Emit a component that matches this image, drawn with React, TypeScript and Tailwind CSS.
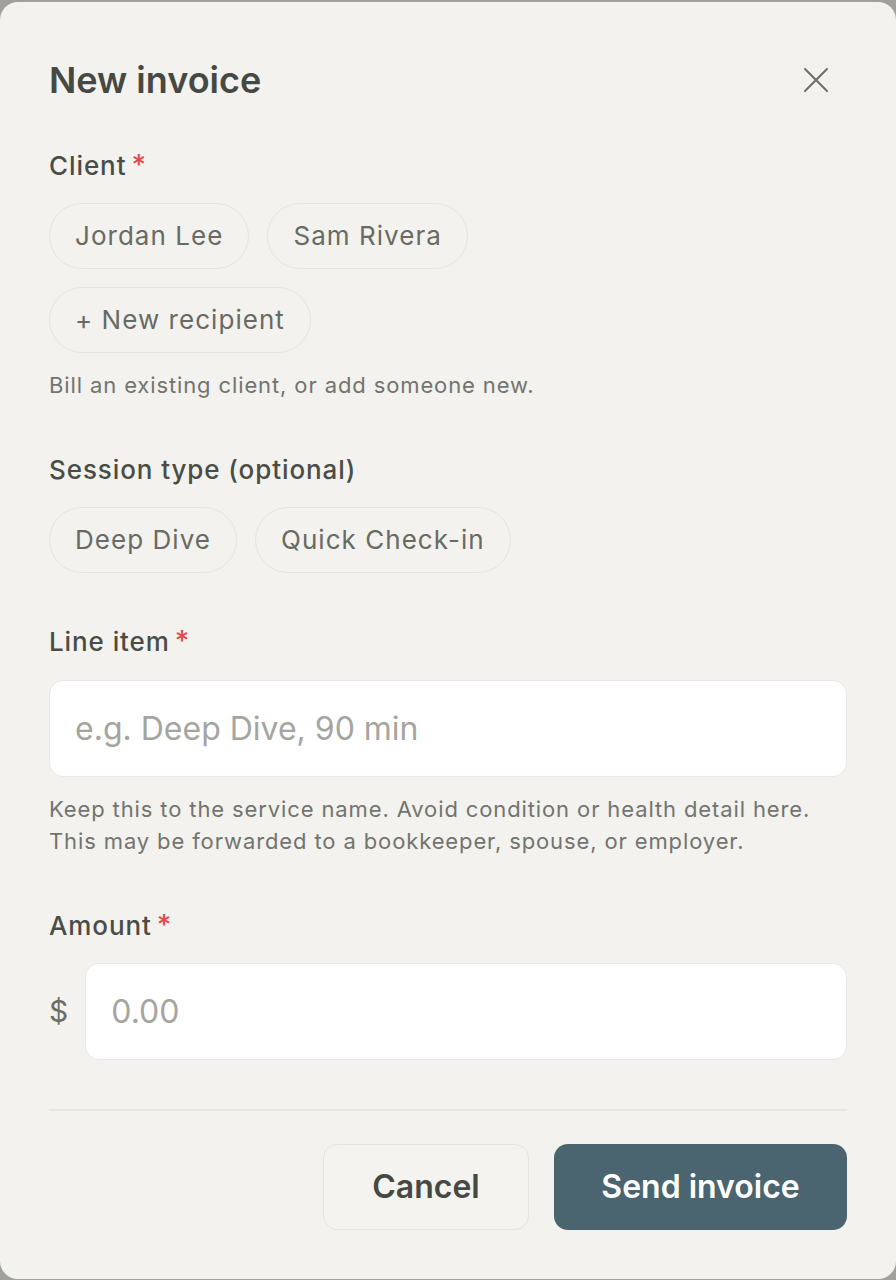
import React from "react";

function Chip({ label }: { label: string }) {
  return (
    <button className="h-[66px] px-[25px] rounded-full border-[1.5px] border-[#e6e4df] bg-[#f3f2ee] text-[26px] tracking-[0.04em] text-[#686a64] leading-none">
      {label}
    </button>
  );
}

function Label({ text, required }: { text: string; required?: boolean }) {
  return (
    <div className="h-[36px] text-[26px] leading-[36px] font-medium tracking-[0.035em] text-[#4a4d47]">
      {text}
      {required && <span className="ml-[5px] text-[28px] leading-none text-[#e5484d]">*</span>}
    </div>
  );
}

export default function App() {
  return (
    <div className="min-h-screen bg-[#a0a19a] pt-[2px] font-['Inter',sans-serif]">
      <div className="bg-[#f3f2ee] rounded-[18px] px-[49px] pt-[56px] pb-[49px] flex flex-col">
        {/* header */}
        <div className="flex items-center justify-between">
          <h1 className="text-[36px] leading-[44px] font-semibold text-[#464943]">New invoice</h1>
          <button className="mr-[19px] text-[#6b6d68]">
            <svg width="24" height="24" viewBox="0 0 24 24" fill="none" stroke="currentColor" strokeWidth="2" strokeLinecap="round">
              <path d="M1 1L23 23M23 1L1 23" />
            </svg>
          </button>
        </div>

        {/* client */}
        <div className="mt-[46px]">
          <Label text="Client" required />
          <div className="mt-[19px] flex flex-wrap gap-[18px] w-[440px]">
            <Chip label="Jordan Lee" />
            <Chip label="Sam Rivera" />
            <Chip label="+ New recipient" />
          </div>
          <p className="mt-[16px] text-[22px] leading-[32px] tracking-[0.04em] text-[#72746e]">
            Bill an existing client, or add someone new.
          </p>
        </div>

        {/* session type */}
        <div className="mt-[51px]">
          <Label text="Session type (optional)" />
          <div className="mt-[19px] flex flex-wrap gap-[18px]">
            <Chip label="Deep Dive" />
            <Chip label="Quick Check-in" />
          </div>
        </div>

        {/* line item */}
        <div className="mt-[51px]">
          <Label text="Line item" required />
          <input
            className="mt-[20px] w-full h-[97px] rounded-[14px] border-[1.5px] border-[#eae8e3] bg-white px-[25px] text-[32px] text-[#464943] placeholder:text-[#a5a5a0] outline-none"
            placeholder="e.g. Deep Dive, 90 min"
          />
          <p className="mt-[16px] text-[22px] leading-[32px] tracking-[0.04em] text-[#72746e]">
            Keep this to the service name. Avoid condition or health detail here.
            <br />
            This may be forwarded to a bookkeeper, spouse, or employer.
          </p>
        </div>

        {/* amount */}
        <div className="mt-[51px]">
          <Label text="Amount" required />
          <div className="mt-[19px] flex items-center gap-[17px]">
            <span className="text-[30px] text-[#6b6d66]">$</span>
            <input
              className="flex-1 h-[97px] rounded-[14px] border-[1.5px] border-[#eae8e3] bg-white px-[25px] text-[32px] text-[#464943] placeholder:text-[#a5a5a0] outline-none"
              placeholder="0.00"
            />
          </div>
        </div>

        <div className="mt-[49px] h-[2px] bg-[#e8e6e1]" />

        {/* footer */}
        <div className="mt-[33px] flex justify-end gap-[25px]">
          <button className="h-[86px] w-[206px] rounded-[14px] border-[1.5px] border-[#e6e4df] bg-[#f4f3ef] text-[32px] font-semibold text-[#464943]">
            Cancel
          </button>
          <button className="h-[86px] w-[293px] rounded-[14px] bg-[#4a6570] text-[32px] font-semibold text-white">
            Send invoice
          </button>
        </div>
      </div>
    </div>
  );
}
